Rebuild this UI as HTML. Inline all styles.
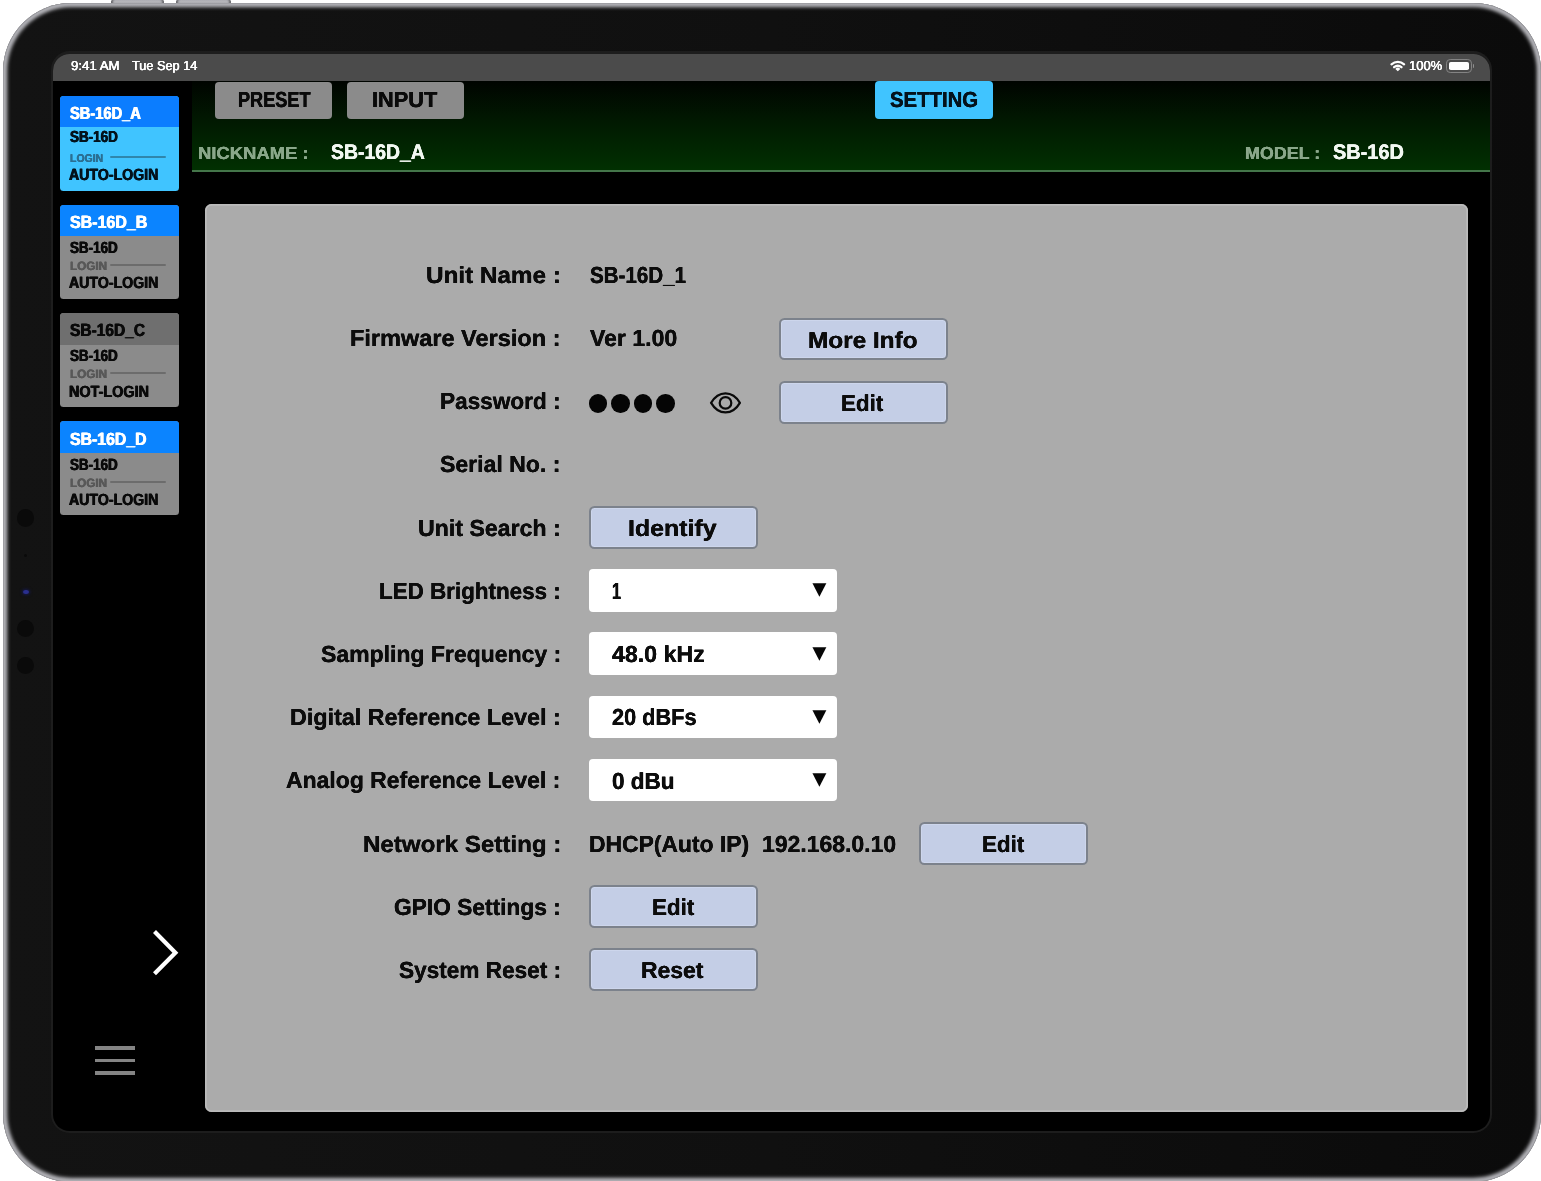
<!DOCTYPE html>
<html><head><meta charset="utf-8"><title>SB-16D Setting</title>
<style>
html,body{margin:0;padding:0;background:#fff;}
body{width:1541px;height:1181px;position:relative;overflow:hidden;font-family:"Liberation Sans",sans-serif;}
.abs{position:absolute}
.t{position:absolute;white-space:pre;line-height:1;font-weight:bold;font-family:"Liberation Sans",sans-serif;text-rendering:geometricPrecision;transform-origin:0 0;}
#txt{position:absolute;left:0;top:0;width:1541px;height:1181px;will-change:transform}
#hwb1,#hwb2{position:absolute;top:0;height:5px;background:linear-gradient(#bcbcc0,#adadb2 60%,#8e8e93);border-radius:1.5px 1.5px 0 0;box-shadow:inset 3px 0 2px -1px #6a6a6e,inset -3px 0 2px -1px #6a6a6e}
#bezel{position:absolute;left:2.6px;top:2.6px;width:1538.8px;height:1179.4px;border-radius:68px;background:linear-gradient(90deg,#131313,#101010 50%,#0b0b0b);box-shadow:inset 0 0 0 0.8px #9a9a9f,inset 0 0 3.6px 4.3px #b4b4b9}
#scrb{position:absolute;left:51.2px;top:51.3px;width:1440.8px;height:1081.7px;border-radius:18.7px;background:#1d1d1d;}
#screen{position:absolute;left:53.4px;top:53.5px;width:1436.4px;height:1077.3px;border-radius:16.5px;background:#000;overflow:hidden;}
#status{position:absolute;left:0;top:0;width:100%;height:27.3px;background:#4b4b4b}
#hdr{position:absolute;left:138.9px;top:27.3px;right:0;height:89.2px;background:linear-gradient(#000400 0%,#011701 40%,#013001 100%);}
#hdrl{position:absolute;left:138.9px;right:0;top:116.2px;height:2.6px;background:#44764a}
.tab{position:absolute;top:81.6px;height:37.4px;border-radius:4px;background:#8b8b8b}
.card{position:absolute;left:60px;width:119.3px;border-radius:3.5px;overflow:hidden}
.card .ct{position:absolute;left:0;top:0;width:100%}
.card .ln{position:absolute;left:50.2px;width:56px;height:2.1px;border-radius:1px}
#panel{position:absolute;left:204.5px;top:204.4px;width:1263.6px;height:907.5px;border-radius:6.5px;background:#ababab;box-shadow:inset 0 0 0 1.7px #bbbbbb}
.btn{position:absolute;width:169px;height:42.5px;box-sizing:border-box;border:2px solid #7c828c;border-radius:5.5px;background:#c4cee6;box-shadow:inset 0 0 0 1px #cdd6ec}
.sel{position:absolute;left:588.8px;width:247.8px;height:42.7px;border-radius:4px;background:#fff}
.dot{position:absolute;width:18.5px;height:18.5px;border-radius:50%;background:#050505;top:394px}
.cam{position:absolute;border-radius:50%;background:#0a0a0a}
</style></head><body>
<div id="hwb1" style="left:110.8px;width:53.4px"></div>
<div id="hwb2" style="left:176.2px;width:54.5px"></div>
<div id="bezel"></div>
<div class="cam" style="left:17.2px;top:509.4px;width:17.2px;height:17.2px"></div>
<div class="cam" style="left:24.4px;top:554px;width:3px;height:3px"></div>
<div class="cam" style="left:22.6px;top:589.6px;width:6px;height:4.4px;background:#2a2f8e;box-shadow:0 0 3px 1px #15184a"></div>
<div class="cam" style="left:17.2px;top:620.1px;width:17.2px;height:17.2px"></div>
<div class="cam" style="left:17.2px;top:656.9px;width:17.2px;height:17.2px"></div>
<div id="scrb"></div>
<div id="screen">
  <div id="status"></div>
  <div id="hdr"></div><div id="hdrl"></div>
</div>
<!-- status icons -->
<svg class="abs" style="left:1389px;top:58px" width="18" height="15" viewBox="0 0 18 15">
  <g fill="none" stroke="#fff" stroke-width="2.3" stroke-linecap="round">
  <path d="M2.5 6.3 A9.6 9.6 0 0 1 15.1 6.3"/>
  <path d="M5.1 9.2 A5.9 5.9 0 0 1 12.5 9.2"/></g>
  <path d="M8.8 13.3 L6.3 10.9 A3.5 3.5 0 0 1 11.3 10.9 Z" fill="#fff"/>
</svg>
<div class="abs" style="left:1446px;top:58.9px;width:25.6px;height:13.8px;box-sizing:border-box;border:1.5px solid #848484;border-radius:4.2px"></div>
<div class="abs" style="left:1448.6px;top:61.7px;width:20.5px;height:8.2px;border-radius:1.8px;background:#fff"></div>
<div class="abs" style="left:1472.6px;top:63.8px;width:1.6px;height:4.2px;border-radius:0 1.2px 1.2px 0;background:#8e8e8e"></div>
<!-- tabs -->
<div class="tab" style="left:215px;width:117.3px"></div>
<div class="tab" style="left:346.6px;width:117.9px"></div>
<div class="tab" style="left:874.5px;width:118.1px;background:#40c4ff;top:81.2px;height:37.8px"></div>
<!-- sidebar -->
<div class="card" style="top:96.2px;height:94.4px;background:#40c4ff"><div class="ct" style="height:30.8px;background:#0b7dff"></div><div class="ln" style="top:59.7px;background:#2f86ac"></div></div>
<div class="card" style="top:204.5px;height:94px;background:#8b8b8b"><div class="ct" style="height:31.8px;background:#0b84ff"></div><div class="ln" style="top:59.6px;background:#6c6c6c"></div></div>
<div class="card" style="top:312.8px;height:94px;background:#8b8b8b"><div class="ct" style="height:31.8px;background:#6f6f6f"></div><div class="ln" style="top:59.6px;background:#6c6c6c"></div></div>
<div class="card" style="top:421.1px;height:94px;background:#8b8b8b"><div class="ct" style="height:31.8px;background:#0b84ff"></div><div class="ln" style="top:59.6px;background:#6c6c6c"></div></div>
<svg class="abs" style="left:148px;top:925px" width="36" height="56" viewBox="0 0 36 56"><path d="M6.5 6.6 L27.4 27.7 L6.5 48.8" fill="none" stroke="#fff" stroke-width="4.2" stroke-linejoin="miter"/></svg>
<div class="abs" style="left:94.9px;top:1045.8px;width:39.7px;height:3.8px;background:#848484"></div>
<div class="abs" style="left:94.9px;top:1058.5px;width:39.7px;height:3.8px;background:#848484"></div>
<div class="abs" style="left:94.9px;top:1071.2px;width:39.7px;height:3.8px;background:#848484"></div>
<!-- panel -->
<div id="panel"></div>
<div class="btn" style="left:778.6px;top:317.9px"></div><div class="btn" style="left:778.6px;top:381.1px"></div><div class="btn" style="left:588.8px;top:506.0px"></div><div class="btn" style="left:919.0px;top:822.0px"></div><div class="btn" style="left:588.8px;top:885.2px"></div><div class="btn" style="left:588.8px;top:948.4px"></div>
<div class="sel" style="top:569.2px"><svg width="15" height="14" viewBox="0 0 15 14" style="position:absolute;left:222.8px;top:14.2px"><path d="M0.45 0.3H14.35L7.4 13.8Z" fill="#060606"/></svg></div><div class="sel" style="top:632.4px"><svg width="15" height="14" viewBox="0 0 15 14" style="position:absolute;left:222.8px;top:14.2px"><path d="M0.45 0.3H14.35L7.4 13.8Z" fill="#060606"/></svg></div><div class="sel" style="top:695.6px"><svg width="15" height="14" viewBox="0 0 15 14" style="position:absolute;left:222.8px;top:14.2px"><path d="M0.45 0.3H14.35L7.4 13.8Z" fill="#060606"/></svg></div><div class="sel" style="top:758.8px"><svg width="15" height="14" viewBox="0 0 15 14" style="position:absolute;left:222.8px;top:14.2px"><path d="M0.45 0.3H14.35L7.4 13.8Z" fill="#060606"/></svg></div>
<div class="dot" style="left:588.95px"></div><div class="dot" style="left:611.45px"></div><div class="dot" style="left:633.95px"></div><div class="dot" style="left:656.45px"></div>
<svg class="abs" style="left:705px;top:388px" width="42" height="30" viewBox="0 0 42 30">
  <g fill="none" stroke="#0a0a0a" stroke-width="2.2">
  <path d="M6.1 14.9 C13.5 2.2 27.5 2.2 34.9 14.9 C27.5 27.6 13.5 27.6 6.1 14.9 Z" stroke-linejoin="miter"/>
  <circle cx="20.5" cy="14.9" r="5.8"/></g>
</svg>
<div id="txt">
<span class="t" style="left:70.80px;top:58.95px;font-size:13.08px;color:#fff;font-weight:normal;text-shadow:0.20px 0 0 currentColor,-0.20px 0 0 currentColor;transform:scaleX(1.0123)">9:41 AM</span>
<span class="t" style="left:131.50px;top:58.95px;font-size:13.08px;color:#fff;font-weight:normal;text-shadow:0.21px 0 0 currentColor,-0.21px 0 0 currentColor;transform:scaleX(0.9722)">Tue Sep 14</span>
<span class="t" style="left:1409.31px;top:58.95px;font-size:13.08px;color:#fff;font-weight:normal;text-shadow:0.20px 0 0 currentColor,-0.20px 0 0 currentColor;transform:scaleX(0.9933)">100%</span>
<span class="t" style="left:237.89px;top:88.58px;font-size:21.80px;color:#0a0a0a;text-shadow:0.27px 0 0 currentColor,-0.27px 0 0 currentColor;transform:scaleX(0.8315)">PRESET</span>
<span class="t" style="left:372.33px;top:88.58px;font-size:21.80px;color:#0a0a0a;text-shadow:0.23px 0 0 currentColor,-0.23px 0 0 currentColor;transform:scaleX(0.9981)">INPUT</span>
<span class="t" style="left:889.93px;top:88.58px;font-size:21.80px;color:#04121c;text-shadow:0.24px 0 0 currentColor,-0.24px 0 0 currentColor;transform:scaleX(0.9331)">SETTING</span>
<span class="t" style="left:198.09px;top:144.76px;font-size:17.44px;color:#8aa78a;text-shadow:0.14px 0 0 currentColor,-0.14px 0 0 currentColor;transform:scaleX(1.0573)">NICKNAME :</span>
<span class="t" style="left:331.20px;top:141.69px;font-size:21.08px;color:#f2f8f2;text-shadow:0.22px 0 0 currentColor,-0.22px 0 0 currentColor;transform:scaleX(0.9210)">SB-16D_A</span>
<span class="t" style="left:1244.92px;top:144.76px;font-size:17.44px;color:#8aa78a;text-shadow:0.15px 0 0 currentColor,-0.15px 0 0 currentColor;transform:scaleX(1.0263)">MODEL :</span>
<span class="t" style="left:1333.10px;top:141.69px;font-size:21.08px;color:#f2f8f2;text-shadow:0.21px 0 0 currentColor,-0.21px 0 0 currentColor;transform:scaleX(0.9451)">SB-16D</span>
<span class="t" style="left:69.90px;top:104.76px;font-size:17.44px;color:#fff;text-shadow:0.48px 0 0 currentColor,-0.48px 0 0 currentColor;transform:scaleX(0.8404)">SB-16D_A</span>
<span class="t" style="left:69.90px;top:130.49px;font-size:15.99px;color:#03121c;text-shadow:0.47px 0 0 currentColor,-0.47px 0 0 currentColor;transform:scaleX(0.8425)">SB-16D</span>
<span class="t" style="left:69.75px;top:154.42px;font-size:11.34px;color:#2b6f93;text-shadow:0.27px 0 0 currentColor,-0.27px 0 0 currentColor;transform:scaleX(0.9246)">LOGIN</span>
<span class="t" style="left:68.90px;top:166.74px;font-size:16.28px;color:#03121c;text-shadow:0.46px 0 0 currentColor,-0.46px 0 0 currentColor;transform:scaleX(0.8699)">AUTO-LOGIN</span>
<span class="t" style="left:69.90px;top:213.52px;font-size:17.73px;color:#fff;text-shadow:0.44px 0 0 currentColor,-0.44px 0 0 currentColor;transform:scaleX(0.9025)">SB-16D_B</span>
<span class="t" style="left:69.90px;top:239.74px;font-size:16.28px;color:#0a0a0a;text-shadow:0.49px 0 0 currentColor,-0.49px 0 0 currentColor;transform:scaleX(0.8244)">SB-16D</span>
<span class="t" style="left:69.80px;top:259.81px;font-size:12.06px;color:#585858;text-shadow:0.31px 0 0 currentColor,-0.31px 0 0 currentColor;transform:scaleX(0.9720)">LOGIN</span>
<span class="t" style="left:68.90px;top:274.74px;font-size:16.28px;color:#0a0a0a;text-shadow:0.46px 0 0 currentColor,-0.46px 0 0 currentColor;transform:scaleX(0.8699)">AUTO-LOGIN</span>
<span class="t" style="left:69.90px;top:321.52px;font-size:17.73px;color:#0a0a0a;text-shadow:0.46px 0 0 currentColor,-0.46px 0 0 currentColor;transform:scaleX(0.8757)">SB-16D_C</span>
<span class="t" style="left:69.90px;top:347.74px;font-size:16.28px;color:#0a0a0a;text-shadow:0.49px 0 0 currentColor,-0.49px 0 0 currentColor;transform:scaleX(0.8244)">SB-16D</span>
<span class="t" style="left:69.80px;top:367.81px;font-size:12.06px;color:#585858;text-shadow:0.31px 0 0 currentColor,-0.31px 0 0 currentColor;transform:scaleX(0.9720)">LOGIN</span>
<span class="t" style="left:69.02px;top:383.74px;font-size:16.28px;color:#0a0a0a;text-shadow:0.45px 0 0 currentColor,-0.45px 0 0 currentColor;transform:scaleX(0.8848)">NOT-LOGIN</span>
<span class="t" style="left:69.90px;top:430.52px;font-size:17.73px;color:#fff;text-shadow:0.45px 0 0 currentColor,-0.45px 0 0 currentColor;transform:scaleX(0.8932)">SB-16D_D</span>
<span class="t" style="left:69.90px;top:456.74px;font-size:16.28px;color:#0a0a0a;text-shadow:0.49px 0 0 currentColor,-0.49px 0 0 currentColor;transform:scaleX(0.8244)">SB-16D</span>
<span class="t" style="left:69.80px;top:476.81px;font-size:12.06px;color:#585858;text-shadow:0.31px 0 0 currentColor,-0.31px 0 0 currentColor;transform:scaleX(0.9720)">LOGIN</span>
<span class="t" style="left:68.90px;top:491.74px;font-size:16.28px;color:#0a0a0a;text-shadow:0.46px 0 0 currentColor,-0.46px 0 0 currentColor;transform:scaleX(0.8699)">AUTO-LOGIN</span>
<span class="t" style="left:426.01px;top:263.85px;font-size:23.26px;color:#0c0c0c;text-shadow:0.14px 0 0 currentColor,-0.14px 0 0 currentColor;transform:scaleX(1.0440)">Unit Name :</span>
<span class="t" style="left:350.34px;top:326.85px;font-size:23.26px;color:#0c0c0c;text-shadow:0.15px 0 0 currentColor,-0.15px 0 0 currentColor;transform:scaleX(1.0117)">Firmware Version :</span>
<span class="t" style="left:440.18px;top:389.85px;font-size:23.26px;color:#0c0c0c;text-shadow:0.15px 0 0 currentColor,-0.15px 0 0 currentColor;transform:scaleX(0.9720)">Password :</span>
<span class="t" style="left:440.35px;top:452.85px;font-size:23.26px;color:#0c0c0c;text-shadow:0.15px 0 0 currentColor,-0.15px 0 0 currentColor;transform:scaleX(0.9916)">Serial No. :</span>
<span class="t" style="left:418.05px;top:516.85px;font-size:23.26px;color:#0c0c0c;text-shadow:0.15px 0 0 currentColor,-0.15px 0 0 currentColor;transform:scaleX(0.9953)">Unit Search :</span>
<span class="t" style="left:378.99px;top:579.85px;font-size:23.26px;color:#0c0c0c;text-shadow:0.16px 0 0 currentColor,-0.16px 0 0 currentColor;transform:scaleX(0.9636)">LED Brightness :</span>
<span class="t" style="left:320.55px;top:642.85px;font-size:23.26px;color:#0c0c0c;text-shadow:0.15px 0 0 currentColor,-0.15px 0 0 currentColor;transform:scaleX(0.9891)">Sampling Frequency :</span>
<span class="t" style="left:290.05px;top:705.85px;font-size:23.26px;color:#0c0c0c;text-shadow:0.15px 0 0 currentColor,-0.15px 0 0 currentColor;transform:scaleX(1.0026)">Digital Reference Level :</span>
<span class="t" style="left:286.45px;top:768.85px;font-size:23.26px;color:#0c0c0c;text-shadow:0.15px 0 0 currentColor,-0.15px 0 0 currentColor;transform:scaleX(0.9875)">Analog Reference Level :</span>
<span class="t" style="left:362.51px;top:832.85px;font-size:23.26px;color:#0c0c0c;text-shadow:0.14px 0 0 currentColor,-0.14px 0 0 currentColor;transform:scaleX(1.0375)">Network Setting :</span>
<span class="t" style="left:393.95px;top:895.85px;font-size:23.26px;color:#0c0c0c;text-shadow:0.15px 0 0 currentColor,-0.15px 0 0 currentColor;transform:scaleX(0.9782)">GPIO Settings :</span>
<span class="t" style="left:398.65px;top:958.85px;font-size:23.26px;color:#0c0c0c;text-shadow:0.15px 0 0 currentColor,-0.15px 0 0 currentColor;transform:scaleX(0.9724)">System Reset :</span>
<span class="t" style="left:589.95px;top:263.85px;font-size:23.26px;color:#0c0c0c;text-shadow:0.17px 0 0 currentColor,-0.17px 0 0 currentColor;transform:scaleX(0.8847)">SB-16D_1</span>
<span class="t" style="left:589.95px;top:326.85px;font-size:23.26px;color:#0c0c0c;text-shadow:0.15px 0 0 currentColor,-0.15px 0 0 currentColor;transform:scaleX(0.9921)">Ver 1.00</span>
<span class="t" style="left:589.17px;top:832.85px;font-size:23.26px;color:#0c0c0c;text-shadow:0.15px 0 0 currentColor,-0.15px 0 0 currentColor;transform:scaleX(0.9839)">DHCP(Auto IP)</span>
<span class="t" style="left:761.86px;top:832.85px;font-size:23.26px;color:#0c0c0c;text-shadow:0.15px 0 0 currentColor,-0.15px 0 0 currentColor;transform:scaleX(0.9879)">192.168.0.10</span>
<span class="t" style="left:611.66px;top:579.85px;font-size:23.26px;color:#0c0c0c;text-shadow:0.22px 0 0 currentColor,-0.22px 0 0 currentColor;transform:scaleX(0.6917)">1</span>
<span class="t" style="left:612.35px;top:642.85px;font-size:23.26px;color:#0c0c0c;text-shadow:0.15px 0 0 currentColor,-0.15px 0 0 currentColor;transform:scaleX(0.9964)">48.0 kHz</span>
<span class="t" style="left:612.35px;top:705.85px;font-size:23.26px;color:#0c0c0c;text-shadow:0.16px 0 0 currentColor,-0.16px 0 0 currentColor;transform:scaleX(0.9350)">20 dBFs</span>
<span class="t" style="left:612.35px;top:769.85px;font-size:23.26px;color:#0c0c0c;text-shadow:0.16px 0 0 currentColor,-0.16px 0 0 currentColor;transform:scaleX(0.9671)">0 dBu</span>
<span class="t" style="left:807.84px;top:328.59px;font-size:22.97px;color:#0c0c0c;text-shadow:0.14px 0 0 currentColor,-0.14px 0 0 currentColor;transform:scaleX(1.0601)">More Info</span>
<span class="t" style="left:841.33px;top:391.59px;font-size:22.97px;color:#0c0c0c;text-shadow:0.15px 0 0 currentColor,-0.15px 0 0 currentColor;transform:scaleX(0.9741)">Edit</span>
<span class="t" style="left:628.37px;top:516.59px;font-size:22.97px;color:#0c0c0c;text-shadow:0.14px 0 0 currentColor,-0.14px 0 0 currentColor;transform:scaleX(1.0847)">Identify</span>
<span class="t" style="left:981.73px;top:832.59px;font-size:22.97px;color:#0c0c0c;text-shadow:0.15px 0 0 currentColor,-0.15px 0 0 currentColor;transform:scaleX(0.9741)">Edit</span>
<span class="t" style="left:651.53px;top:895.59px;font-size:22.97px;color:#0c0c0c;text-shadow:0.15px 0 0 currentColor,-0.15px 0 0 currentColor;transform:scaleX(0.9741)">Edit</span>
<span class="t" style="left:641.45px;top:958.59px;font-size:22.97px;color:#0c0c0c;text-shadow:0.15px 0 0 currentColor,-0.15px 0 0 currentColor;transform:scaleX(0.9972)">Reset</span>
</div>
</body></html>
